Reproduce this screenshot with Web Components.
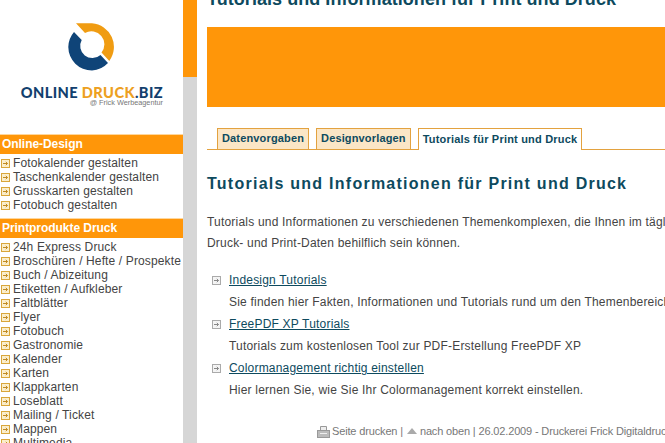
<!DOCTYPE html>
<html lang="de">
<head>
<meta charset="utf-8">
<title>Tutorials und Informationen</title>
<style>
  html, body { margin: 0; height: 100%; overflow: hidden; background: #fff; }
  body { font: 12px "Liberation Sans", Arial, sans-serif; color: #444; }
</style>
</head>
<body>
<site-page>
  <site-sidebar slot="sidebar">
    <site-logo></site-logo>
    <nav-group heading="Online-Design">
      <nav-item>Fotokalender gestalten</nav-item>
      <nav-item>Taschenkalender gestalten</nav-item>
      <nav-item>Grusskarten gestalten</nav-item>
      <nav-item>Fotobuch gestalten</nav-item>
    </nav-group>
    <nav-group heading="Printprodukte Druck">
      <nav-item>24h Express Druck</nav-item>
      <nav-item>Broschüren / Hefte / Prospekte</nav-item>
      <nav-item>Buch / Abizeitung</nav-item>
      <nav-item>Etiketten / Aufkleber</nav-item>
      <nav-item>Faltblätter</nav-item>
      <nav-item>Flyer</nav-item>
      <nav-item>Fotobuch</nav-item>
      <nav-item>Gastronomie</nav-item>
      <nav-item>Kalender</nav-item>
      <nav-item>Karten</nav-item>
      <nav-item>Klappkarten</nav-item>
      <nav-item>Loseblatt</nav-item>
      <nav-item>Mailing / Ticket</nav-item>
      <nav-item>Mappen</nav-item>
      <nav-item>Multimedia</nav-item>
    </nav-group>
  </site-sidebar>
  <site-content>
    <tab-bar>
      <tab-item>Datenvorgaben</tab-item>
      <tab-item>Designvorlagen</tab-item>
      <tab-item active>Tutorials für Print und Druck</tab-item>
    </tab-bar>
    <section-title>Tutorials und Informationen für Print und Druck</section-title>
    <intro-text>Tutorials und Informationen zu verschiedenen Themenkomplexen, die Ihnen im täglichen<br>Druck- und Print-Daten behilflich sein können.</intro-text>
    <tutorial-entry title-text="Indesign Tutorials">Sie finden hier Fakten, Informationen und Tutorials rund um den Themenbereich InDesign</tutorial-entry>
    <tutorial-entry title-text="FreePDF XP Tutorials">Tutorials zum kostenlosen Tool zur PDF-Erstellung FreePDF XP</tutorial-entry>
    <tutorial-entry title-text="Colormanagement richtig einstellen">Hier lernen Sie, wie Sie Ihr Colormanagement korrekt einstellen.</tutorial-entry>
    <page-footer></page-footer>
  </site-content>
</site-page>

<script>
/**
 * Builds an element class whose open shadow root is cloned from the given markup.
 * The optional setup callback fills in attribute driven texts.
 */
function define(name, html, setup) {
  const template = document.createElement('template');
  template.innerHTML = html;
  window.customElements.define(name, class extends HTMLElement {
    constructor() {
      super();
      this.attachShadow({mode: 'open'}).appendChild(template.content.cloneNode(true));
    }
    connectedCallback() {
      if (setup) setup(this, this.shadowRoot);
    }
  });
}

const ARROW = 'M2 4.500H6.500M4.800 2.800L6.500 4.500L4.800 6.200';

define('site-page', `<style>
  :host { display: grid; grid-template-columns: 183px 14px 1fr; width: 665px; height: 443px; overflow: hidden; }
  .strip { background: linear-gradient(#ff9609 0, #ff9609 77px, #d6d6d6 77px); }
</style>
<slot name="sidebar"></slot>
<div class="strip"></div>
<slot></slot>`);

define('site-sidebar', `<style>
  :host { display: block; height: 443px; overflow: hidden; background: #fff; }
</style>
<slot></slot>`);

define('site-logo', `<style>
  :host { display: flex; flex-direction: column; align-items: flex-end; height: 134px; box-sizing: border-box; padding: 23px 20px 0 0; }
  svg { display: block; align-self: flex-start; margin-left: 68px; }
  .brand { margin-top: 15px; height: 13px; font: 900 14.600px/13px Lato, "Liberation Sans", sans-serif; letter-spacing: .4px; color: #123f6e; white-space: nowrap; }
  .brand b { font-weight: 900; color: #eda021; }
  .sub { margin-top: 0; font: 7.300px/8px "Liberation Sans", sans-serif; color: #777; white-space: nowrap; }
</style>
<svg width="48" height="48" viewBox="0 0 48 48" aria-hidden="true">
  <path fill="#f09c12" d="M8 .3H24A23.700 23.700 0 0 1 41.300 38L33.500 29.500A13 13 0 0 0 17 10Z"/>
  <path fill="#0f4478" d="M6 9L13.700 17A12.200 12.200 0 0 0 32.500 32L40 40A24 24 0 0 1 24 47.500A23.700 23.700 0 0 1 .3 24A24 24 0 0 1 6 9Z"/>
</svg>
<div class="brand">ONLINE <b>DRUCK</b>.BIZ</div>
<div class="sub">@ Frick Werbeagentur</div>`);

define('nav-group', `<style>
  :host { display: block; margin-bottom: 6px; }
  .head { height: 20px; padding-left: 2px; background: #ff9609; border-top: 1px solid #ffd79c; box-sizing: border-box; color: #fff; font: bold 12px/19px "Liberation Sans", sans-serif; letter-spacing: -.05px; }
  .list { padding-top: 2px; }
</style>
<div class="head"></div>
<div class="list"><slot></slot></div>`, (el, root) => {
  root.querySelector('.head').textContent = el.getAttribute('heading');
});

define('nav-item', `<style>
  :host { display: flex; align-items: center; gap: 3px; height: 14px; padding-left: 1px; color: #444; font: 12px/14px "Liberation Sans", sans-serif; letter-spacing: .13px; white-space: nowrap; }
  svg { flex: none; }
</style>
<svg width="9" height="9" viewBox="0 0 9 9" aria-hidden="true">
  <rect x=".5" y=".5" width="8" height="8" fill="#fbeecb" stroke="#d9a63a"/>
  <path d="${ARROW}" fill="none" stroke="#c08a22"/>
</svg>
<span><slot></slot></span>`);

define('site-content', `<style>
  :host { display: block; height: 443px; overflow: hidden; padding-left: 10px; min-width: 0; }
  .top { height: 27px; overflow: hidden; display: flex; align-items: flex-end; }
  h1 { margin: 0 0 19px; font: bold 18px/18px "Liberation Sans", sans-serif; color: #0d4a5e; letter-spacing: .05px; white-space: nowrap; }
  .banner { height: 80px; background: #ff9609; margin-bottom: 21px; }
</style>
<div class="top"><h1>Tutorials und Informationen für Print und Druck</h1></div>
<div class="banner"></div>
<slot></slot>`);

define('tab-bar', `<style>
  :host { display: flex; align-items: flex-end; gap: 7px; height: 21px; padding-left: 10px; border-bottom: 1px solid #e3a23f; }
</style>
<slot></slot>`);

define('tab-item', `<style>
  :host { display: block; height: 21px; padding: 0 4px; box-sizing: border-box; background: #fbe6c6; border: 1px solid #e3a23f; border-bottom: 0; color: #0d4a5e; font: bold 11px/19px "Liberation Sans", sans-serif; letter-spacing: .15px; white-space: nowrap; }
  :host([active]) { height: 22px; margin-bottom: -1px; background: #fff; line-height: 21px; letter-spacing: .2px; }
</style>
<slot></slot>`);

define('section-title', `<style>
  :host { display: block; margin: 24px 0 18px; font: bold 16px/20px "Liberation Sans", sans-serif; color: #0d4a5e; letter-spacing: 1.250px; white-space: nowrap; }
</style>
<slot></slot>`);

define('intro-text', `<style>
  :host { display: block; margin-bottom: 15px; color: #444; font: 12px/21px "Liberation Sans", sans-serif; letter-spacing: .2px; white-space: nowrap; }
</style>
<slot></slot>`);

define('tutorial-entry', `<style>
  :host { display: block; height: 44px; color: #444; }
  .title { display: flex; align-items: center; gap: 8px; height: 22px; padding-left: 5px; }
  a { color: #0d4a5e; text-decoration: underline; font: 12px/22px "Liberation Sans", sans-serif; letter-spacing: .2px; white-space: nowrap; }
  svg { flex: none; }
  p { margin: 0; padding-left: 22px; font: 12px/22px "Liberation Sans", sans-serif; letter-spacing: .2px; white-space: nowrap; }
</style>
<div class="title">
  <svg width="9" height="9" viewBox="0 0 9 9" aria-hidden="true">
    <rect x=".5" y=".5" width="8" height="8" fill="#f4f4f4" stroke="#aaa"/>
    <path d="${ARROW}" fill="none" stroke="#888"/>
  </svg>
  <a href="#"></a>
</div>
<p><slot></slot></p>`, (el, root) => {
  root.querySelector('a').textContent = el.getAttribute('title-text');
});

define('page-footer', `<style>
  :host { display: flex; align-items: center; height: 16px; margin-top: 22px; padding-left: 110px; color: #777; font: 11px/16px "Liberation Sans", sans-serif; letter-spacing: -.15px; white-space: nowrap; }
  svg { flex: none; }
  .print { margin-right: 2px; }
  .up { margin: 0 3px 0 4px; }
</style>
<svg class="print" width="13" height="13" viewBox="0 0 13 13" aria-hidden="true">
  <path d="M3.500 5.500V1.500H9.500V5.500" fill="#eee" stroke="#999"/>
  <rect x=".5" y="5.500" width="12" height="7" fill="#bbb" stroke="#999"/>
  <path d="M3 8.500H10" stroke="#eee"/>
</svg>
<span>Seite drucken |</span>
<svg class="up" width="10" height="6" viewBox="0 0 10 6" aria-hidden="true"><path d="M5 0L10 6H0Z" fill="#aaa"/></svg>
<span>nach oben | 26.02.2009 - Druckerei Frick Digitaldruck</span>`);
</script>
</body>
</html>
